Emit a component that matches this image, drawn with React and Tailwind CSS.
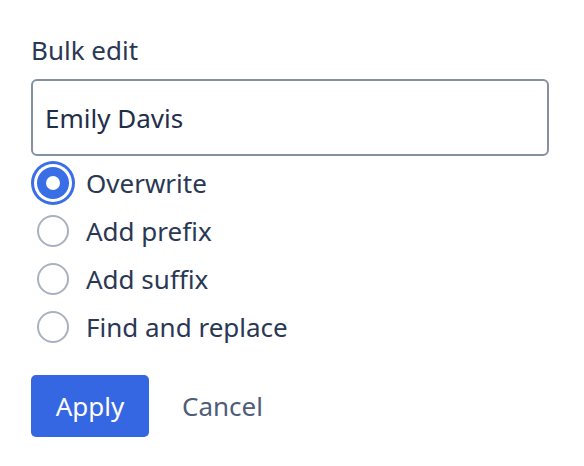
import React, { useState } from 'react';

const options = ['Overwrite', 'Add prefix', 'Add suffix', 'Find and replace'];

export default function App() {
    const [mode, setMode] = useState('Overwrite');
    const [value, setValue] = useState('Emily Davis');

    return (
        <div
            className="w-[584px] h-[466px] bg-white pl-[31px] pt-[33px] text-[#2a3854]"
            style={{ fontFamily: '"Noto Sans", "Open Sans", sans-serif' }}
        >
            <div className="text-[26px] leading-[35px]">Bulk edit</div>

            <input
                value={value}
                onChange={(e) => setValue(e.target.value)}
                className="mt-[11px] block w-[518px] h-[77px] border-2 border-[#8590a2] rounded-[6px] px-[12px] text-[26px] text-[#1f2e4b] outline-none"
            />

            <div className="mt-[3px] flex flex-col">
                {options.map((opt) => {
                    const checked = mode === opt;
                    return (
                        <label key={opt} className="h-[48px] flex items-center cursor-pointer" onClick={() => setMode(opt)}>
                            <span className="ml-[6px] w-[32px] h-[32px] flex items-center justify-center">
                                {checked ? (
                                    <span className="w-[32px] h-[32px] rounded-full bg-[#3a6ee6] shadow-[0_0_0_3px_#ffffff,0_0_0_6px_#3a6ee6] flex items-center justify-center">
                                        <span className="w-[14px] h-[14px] rounded-full bg-white"></span>
                                    </span>
                                ) : (
                                    <span className="w-[32px] h-[32px] rounded-full border-[2.5px] border-[#a9b1c0] bg-white"></span>
                                )}
                            </span>
                            <span className="ml-[17px] text-[26px] leading-none">{opt}</span>
                        </label>
                    );
                })}
            </div>

            <div className="mt-[24px] flex items-center">
                <button className="w-[118px] h-[62px] rounded-[5px] bg-[#3567e3] text-white text-[26px]">Apply</button>
                <button className="ml-[33px] text-[26px] text-[#4f5d78]">Cancel</button>
            </div>
        </div>
    );
}
